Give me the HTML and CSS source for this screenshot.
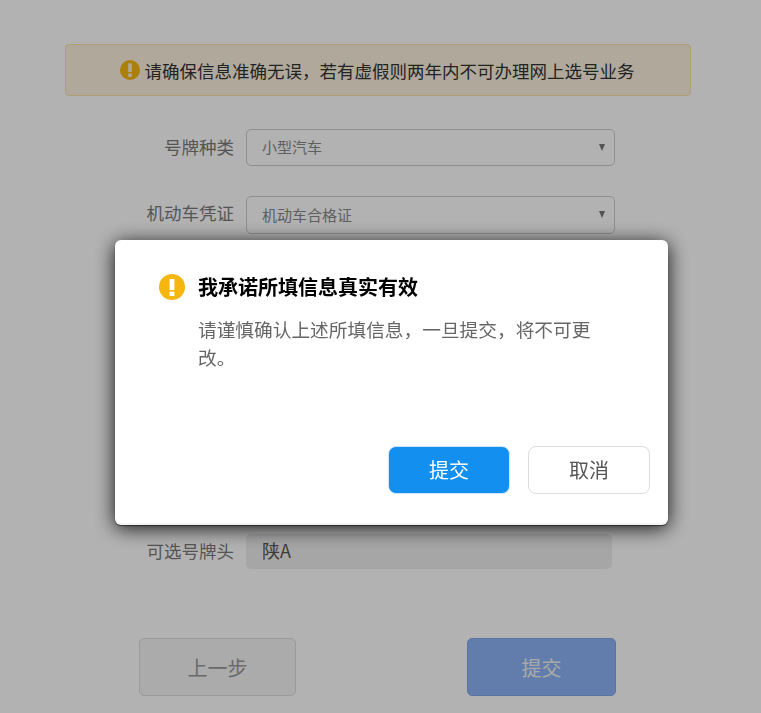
FILE: index.html
```html
<!DOCTYPE html>
<html lang="zh-CN">
<head>
    <meta charset="UTF-8">
    <title>网上选号</title>
    <link rel="stylesheet" href="styles.css">
</head>
<body>
    <div class="page">
        <div class="notice">
            <svg class="notice-icon" viewBox="0 0 20 20" width="20" height="20">
                <circle cx="10" cy="10" r="10" fill="#f5b60f"/>
                <rect x="8.2" y="3.4" width="3.6" height="8.6" fill="#fcf2de"/>
                <rect x="8.2" y="13.4" width="3.6" height="3.4" fill="#fcf2de"/>
            </svg>
            <span>请确保信息准确无误，若有虚假则两年内不可办理网上选号业务</span>
        </div>

        <div class="form-row">
            <label>号牌种类</label>
            <div class="select">小型汽车<span class="arrow"></span></div>
        </div>
        <div class="form-row second">
            <label>机动车凭证</label>
            <div class="select tall">机动车合格证<span class="arrow"></span></div>
        </div>
        <div class="form-row last">
            <label>可选号牌头</label>
            <div class="readonly">陕A</div>
        </div>

        <div class="actions">
            <button class="btn btn-prev">上一步</button>
            <button class="btn btn-next">提交</button>
        </div>
    </div>

    <div class="mask"></div>

    <div class="dialog">
        <div class="dialog-head">
            <svg class="dialog-icon" viewBox="0 0 26 26" width="26" height="26">
                <circle cx="13" cy="13" r="13" fill="#f5b60f"/>
                <rect x="10.6" y="5" width="4.8" height="11" fill="#fff"/>
                <rect x="10.6" y="17.6" width="4.8" height="4.4" fill="#fff"/>
            </svg>
            <h3>我承诺所填信息真实有效</h3>
        </div>
        <p class="dialog-text">请谨慎确认上述所填信息，一旦提交，将不可更改。</p>
        <div class="dialog-foot">
            <button class="dlg-btn dlg-primary">提交</button>
            <button class="dlg-btn">取消</button>
        </div>
    </div>
</body>
</html>
```

FILE: styles.css
```css
* {
    margin: 0;
    padding: 0;
    box-sizing: border-box;
    font-family: "Noto Sans CJK SC", "Liberation Sans", sans-serif;
}

body {
    background: #fff;
    height: 713px;
    overflow: hidden;
}

.page {
    padding: 44px 70px 0 65px;
}

.notice {
    display: flex;
    align-items: center;
    justify-content: center;
    gap: 5px;
    height: 52px;
    width: 626px;
    padding-right: 2px;
    background: #fcf2de;
    border: 1px solid #f8e2a8;
    border-radius: 4px;
    color: #333;
    font-size: 17.5px;
}

.form-row {
    display: flex;
    align-items: center;
    margin-top: 33px;
}

.form-row.second {
    margin-top: 30px;
}

.form-row.last {
    margin-top: 300px;
}

.form-row label {
    width: 181px;
    padding: 0 12px 3px 0;
    text-align: right;
    color: #7a7a7a;
    font-size: 17.5px;
}

.form-row.second label {
    padding-bottom: 5px;
}

.select {
    position: relative;
    width: 369px;
    height: 37px;
    padding-left: 15px;
    line-height: 34px;
    border: 1px solid #ccc;
    border-radius: 5px;
    color: #888;
    font-size: 15px;
}

.select.tall {
    height: 38px;
    line-height: 36px;
}

.arrow {
    position: absolute;
    right: 9px;
    top: 14px;
    border-left: 3.5px solid transparent;
    border-right: 3.5px solid transparent;
    border-top: 7px solid #777;
}

.readonly {
    width: 366px;
    height: 35px;
    padding-left: 16px;
    line-height: 33px;
    background: #eee;
    border-radius: 5px;
    color: #555;
    font-size: 18px;
}

.actions {
    display: flex;
    justify-content: space-between;
    width: 477px;
    margin: 69px 0 0 74px;
}

.btn {
    height: 58px;
    border-radius: 5px;
    font-size: 20px;
}

.btn-prev {
    width: 157px;
    background: #f5f5f5;
    border: 1px solid #ddd;
    color: #999;
}

.btn-next {
    width: 149px;
    background: #8db4f5;
    border: 1px solid #84a8e4;
    color: #f2f2f2;
}

.mask {
    position: fixed;
    inset: 0;
    background: rgba(0, 0, 0, 0.3);
}

.dialog {
    position: fixed;
    left: 115px;
    top: 240px;
    width: 553px;
    height: 285px;
    background: #fff;
    border-radius: 6px;
    box-shadow: inset 0 -2px 2px rgba(0, 0, 0, 0.05), 0 1px 1px rgba(0, 0, 0, 0.5), 0 3px 20px rgba(0, 0, 0, 0.9);
    padding: 34px 18px 31px 44px;
    display: flex;
    flex-direction: column;
}

.dialog-head {
    display: flex;
    align-items: center;
    gap: 13px;
}

.dialog-head h3 {
    font-size: 20px;
    font-weight: 700;
    line-height: 26px;
    color: #000;
}

.dialog-text {
    width: 402px;
    margin: 15px 0 0 39px;
    font-size: 18.7px;
    line-height: 28px;
    color: #666;
}

.dialog-foot {
    display: flex;
    justify-content: flex-end;
    gap: 18px;
    margin-top: auto;
}

.dlg-btn {
    width: 122px;
    height: 48px;
    padding-bottom: 2px;
    background: #fff;
    border: 1px solid #dcdcdc;
    border-radius: 8px;
    color: #555;
    font-size: 20px;
}

.dlg-primary {
    background: #138ff0;
    border-color: #cfe6fa;
    color: #fff;
}
```
